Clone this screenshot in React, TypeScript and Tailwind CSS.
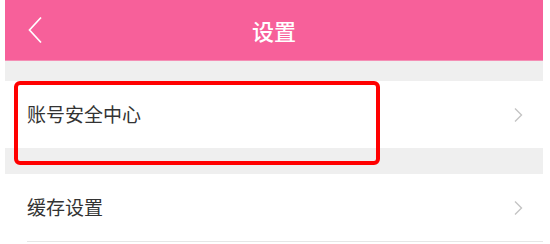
import React from "react";

const Chevron = () => (
	<svg width="10" height="16" viewBox="0 0 10 16" fill="none">
		<path d="M2 1.5 L8.5 8 L2 14.5" stroke="#c4c4c4" strokeWidth="1.4" />
	</svg>
);

const Row = (props: { label: string }) => (
	<div className="h-[67px] bg-white flex items-center justify-between pl-[22px] pr-[20px]">
		<span className="text-[19px] text-[#333]">{props.label}</span>
		<Chevron />
	</div>
);

export default function App() {
	return (
		<div
			className="w-[550px] h-[244px] bg-white pl-[5px] pr-[7px] overflow-hidden"
			style={{ fontFamily: '"Noto Sans CJK SC", "Noto Sans", sans-serif' }}
		>
			<div className="relative">
				<div className="h-[61px] bg-[#f7609a] border-b border-[#f48fb5] flex items-center justify-center relative">
					<svg className="absolute left-[22px] top-[16px]" width="16" height="28" viewBox="0 0 16 28" fill="none">
						<path d="M14 1.5 L2.5 14 L14 26.5" stroke="#fff" strokeWidth="1.7" />
					</svg>
					<span className="text-white text-[22px] font-medium">设置</span>
				</div>
				<div className="h-[20px] bg-[#efefef]" />
				<Row label="账号安全中心" />
				<div className="h-[26px] bg-[#efefef]" />
				<Row label="缓存设置" />
				<div className="h-px bg-[#e6e6e6] ml-[22px]" />

				<div className="absolute left-[9px] top-[81px] w-[366px] h-[84px] border-[4px] border-[#ff0000] rounded-[6px]" />
			</div>
		</div>
	);
}
